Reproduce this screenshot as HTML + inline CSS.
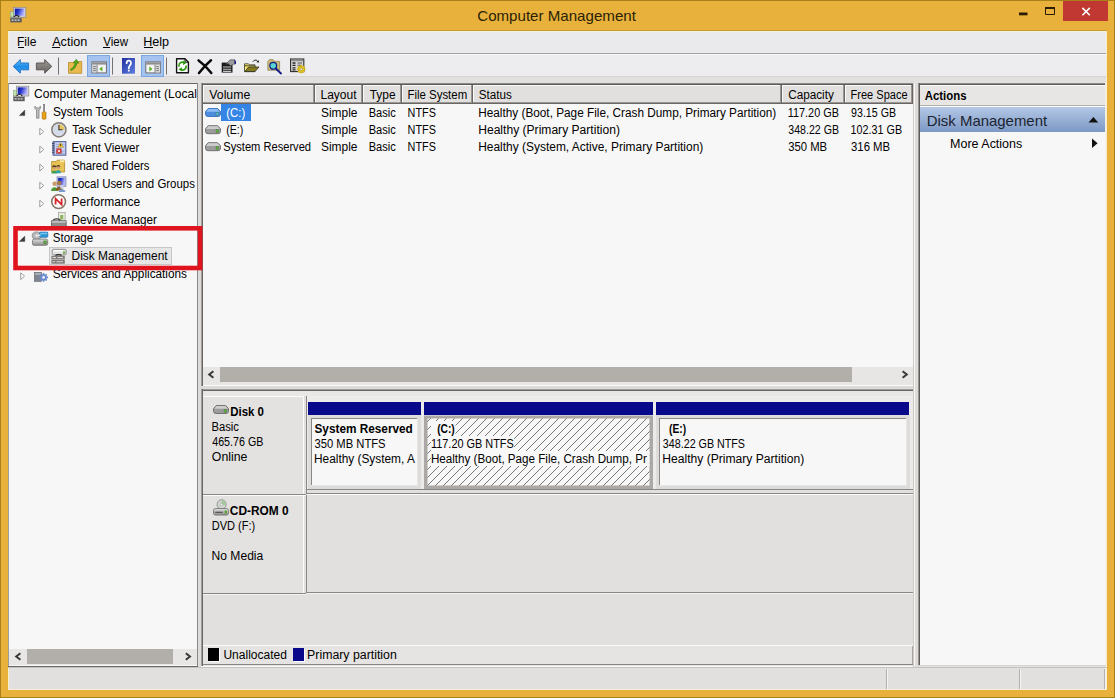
<!DOCTYPE html>
<html><head><meta charset="utf-8"><title>Computer Management</title>
<style>
html,body{margin:0;padding:0;background:#E7B13C;}
body{width:1115px;height:698px;overflow:hidden;font-family:"Liberation Sans",sans-serif;}
svg{display:block;font-family:"Liberation Sans",sans-serif;}
</style></head><body>
<svg width="1115" height="698" viewBox="0 0 1115 698" shape-rendering="auto">
<rect x="0" y="0" width="1115" height="698" fill="#E7B13C" />
<rect x="0" y="0" width="1115" height="1" fill="#A8801A" />
<rect x="0" y="0" width="1" height="698" fill="#A8801A" />
<rect x="1114" y="0" width="1" height="698" fill="#A8801A" />
<rect x="0" y="697" width="1115" height="1" fill="#A8801A" />
<rect x="8" y="30" width="1099" height="1" fill="#C99C30" />
<rect x="8" y="31" width="1099" height="659" fill="#E2E0DE" />
<rect x="8" y="31" width="1099" height="22" fill="#EAEAEC" />
<rect x="8" y="31" width="1099" height="1" fill="#F7F0DC" />
<rect x="8" y="31" width="1" height="52" fill="#F8EDCC" />
<rect x="8" y="668" width="1" height="22" fill="#F8EDCC" />
<rect x="8" y="689" width="1099" height="1" fill="#F6EED8" />
<rect x="8" y="53" width="1099" height="1" fill="#A2A2A2" />
<rect x="8" y="54" width="1099" height="1" fill="#FAFAFB" />
<rect x="8" y="55" width="1099" height="21" fill="#EDEDEF" />
<rect x="8" y="76" width="1099" height="1" fill="#D6D4D4" />
<rect x="1063" y="1" width="45" height="20" fill="#C03831" />
<path d="M1082.4 7.9 L1089.8 15.2 M1089.8 7.9 L1082.4 15.2" stroke="#fff" stroke-width="1.6" fill="none"/>
<path d="M1045.5 8 H1054.5 V14.5 H1045.5 Z" stroke="#2a1c04" stroke-width="1" fill="none"/>
<rect x="1045" y="7" width="10" height="2" fill="#2a1c04" />
<rect x="1019" y="12.5" width="8.5" height="2.8" fill="#2a1c04" />
<rect x="8" y="83" width="190" height="584" fill="#F8F7F7" />
<rect x="8" y="83" width="190" height="1" fill="#6A6663" />
<rect x="8" y="83" width="1" height="584" fill="#A09E9C" />
<rect x="197" y="83" width="1" height="584" fill="#8A8886" />
<rect x="8" y="666" width="190" height="1" fill="#6A6663" />
<rect x="9" y="649" width="188" height="16" fill="#E8E6E4" />
<rect x="27" y="649" width="146" height="15" fill="#B2AEAA" />
<path d="M20.4 653.2 L16.2 656.5 L20.4 659.8" stroke="#3a3836" stroke-width="2" fill="none"/>
<path d="M185.8 653.2 L190 656.5 L185.8 659.8" stroke="#3a3836" stroke-width="2" fill="none"/>
<rect x="198" y="83" width="3" height="584" fill="#DEDCDA" />
<rect x="201" y="83" width="713" height="303" fill="#F8F7F7" />
<rect x="201" y="83" width="713" height="1" fill="#8E8A88" />
<rect x="201" y="84" width="713" height="1" fill="#5E5A57" />
<rect x="201" y="83" width="1" height="303" fill="#A09C9A" />
<rect x="202" y="83" width="1" height="303" fill="#6A6663" />
<rect x="203" y="85" width="112" height="19" fill="#E2E0DE" />
<rect x="203" y="85" width="111" height="1" fill="#FBFBFB" />
<rect x="203" y="85" width="1" height="17" fill="#FBFBFB" />
<rect x="203" y="102" width="112" height="1" fill="#9A9694" />
<rect x="203" y="103" width="112" height="1" fill="#6A6663" />
<rect x="313" y="85" width="1" height="18" fill="#9A9694" />
<rect x="314" y="85" width="1" height="19" fill="#6A6663" />
<rect x="315" y="85" width="48" height="19" fill="#E2E0DE" />
<rect x="315" y="85" width="47" height="1" fill="#FBFBFB" />
<rect x="315" y="85" width="1" height="17" fill="#FBFBFB" />
<rect x="315" y="102" width="48" height="1" fill="#9A9694" />
<rect x="315" y="103" width="48" height="1" fill="#6A6663" />
<rect x="361" y="85" width="1" height="18" fill="#9A9694" />
<rect x="362" y="85" width="1" height="19" fill="#6A6663" />
<rect x="363" y="85" width="39" height="19" fill="#E2E0DE" />
<rect x="363" y="85" width="38" height="1" fill="#FBFBFB" />
<rect x="363" y="85" width="1" height="17" fill="#FBFBFB" />
<rect x="363" y="102" width="39" height="1" fill="#9A9694" />
<rect x="363" y="103" width="39" height="1" fill="#6A6663" />
<rect x="400" y="85" width="1" height="18" fill="#9A9694" />
<rect x="401" y="85" width="1" height="19" fill="#6A6663" />
<rect x="402" y="85" width="71" height="19" fill="#E2E0DE" />
<rect x="402" y="85" width="70" height="1" fill="#FBFBFB" />
<rect x="402" y="85" width="1" height="17" fill="#FBFBFB" />
<rect x="402" y="102" width="71" height="1" fill="#9A9694" />
<rect x="402" y="103" width="71" height="1" fill="#6A6663" />
<rect x="471" y="85" width="1" height="18" fill="#9A9694" />
<rect x="472" y="85" width="1" height="19" fill="#6A6663" />
<rect x="473" y="85" width="309" height="19" fill="#E2E0DE" />
<rect x="473" y="85" width="308" height="1" fill="#FBFBFB" />
<rect x="473" y="85" width="1" height="17" fill="#FBFBFB" />
<rect x="473" y="102" width="309" height="1" fill="#9A9694" />
<rect x="473" y="103" width="309" height="1" fill="#6A6663" />
<rect x="780" y="85" width="1" height="18" fill="#9A9694" />
<rect x="781" y="85" width="1" height="19" fill="#6A6663" />
<rect x="782" y="85" width="63" height="19" fill="#E2E0DE" />
<rect x="782" y="85" width="62" height="1" fill="#FBFBFB" />
<rect x="782" y="85" width="1" height="17" fill="#FBFBFB" />
<rect x="782" y="102" width="63" height="1" fill="#9A9694" />
<rect x="782" y="103" width="63" height="1" fill="#6A6663" />
<rect x="843" y="85" width="1" height="18" fill="#9A9694" />
<rect x="844" y="85" width="1" height="19" fill="#6A6663" />
<rect x="845" y="85" width="68" height="19" fill="#E2E0DE" />
<rect x="845" y="85" width="67" height="1" fill="#FBFBFB" />
<rect x="845" y="85" width="1" height="17" fill="#FBFBFB" />
<rect x="845" y="102" width="68" height="1" fill="#9A9694" />
<rect x="845" y="103" width="68" height="1" fill="#6A6663" />
<rect x="911" y="85" width="1" height="18" fill="#9A9694" />
<rect x="912" y="85" width="1" height="19" fill="#6A6663" />
<rect x="913" y="85" width="1" height="19" fill="#F8F7F7" />
<rect x="221" y="104" width="30" height="17" fill="#3585E6" />
<rect x="203" y="367" width="710" height="18" fill="#E8E6E4" />
<rect x="220" y="367" width="632" height="15" fill="#B2AEAA" />
<path d="M213.4 371.2 L209.2 374.5 L213.4 377.8" stroke="#3a3836" stroke-width="2" fill="none"/>
<path d="M902.6 371.2 L906.8 374.5 L902.6 377.8" stroke="#3a3836" stroke-width="2" fill="none"/>
<rect x="203" y="385" width="710" height="1" fill="#FCFCFC" />
<rect x="201" y="386" width="713" height="3" fill="#DCDAD8" />
<rect x="201" y="389" width="713" height="278" fill="#E2E0DE" />
<rect x="201" y="389" width="713" height="1" fill="#A09C9A" />
<rect x="201" y="390" width="713" height="1" fill="#6A6663" />
<rect x="201" y="389" width="1" height="278" fill="#A09C9A" />
<rect x="202" y="389" width="1" height="278" fill="#6A6663" />
<rect x="203" y="391" width="710" height="5" fill="#E9E7E5" />
<rect x="203" y="396" width="101" height="1" fill="#FBFBFB" />
<rect x="307" y="396" width="606" height="1" fill="#F0EEEC" />
<rect x="203" y="397" width="100" height="97" fill="#E4E2E0" />
<rect x="303" y="396" width="1" height="98" fill="#FBFBFB" />
<rect x="306" y="396" width="1" height="98" fill="#8A8684" />
<rect x="203" y="494" width="103" height="1" fill="#8A8684" />
<rect x="203" y="495" width="103" height="1" fill="#FBFBFB" />
<rect x="307" y="489" width="606" height="1" fill="#8A8684" />
<rect x="307" y="493" width="606" height="1" fill="#8A8684" />
<rect x="307" y="494" width="606" height="1" fill="#FBFBFB" />
<rect x="307" y="397" width="606" height="92" fill="#EDEBE9" />
<rect x="308" y="402" width="113" height="13" fill="#08088A" />
<rect x="424" y="402" width="229" height="13" fill="#08088A" />
<rect x="656" y="402" width="253" height="13" fill="#08088A" />
<defs><pattern id="hatch" width="8" height="8" patternUnits="userSpaceOnUse" x="1" y="0"><rect width="8" height="8" fill="#F8F8F8"/><path d="M-1 9 L9 -1 M-1 1 L1 -1 M7 9 L9 7" stroke="#555" stroke-width="0.8"/></pattern><linearGradient id="hdr" x1="0" y1="0" x2="0" y2="1"><stop offset="0" stop-color="#B4C8E6"/><stop offset="1" stop-color="#7C98C4"/></linearGradient><linearGradient id="barrow" x1="0" y1="0" x2="0" y2="1"><stop offset="0" stop-color="#6EC4FA"/><stop offset="0.5" stop-color="#1C8CE8"/><stop offset="1" stop-color="#3AA4F0"/></linearGradient><linearGradient id="garrow" x1="0" y1="0" x2="0" y2="1"><stop offset="0" stop-color="#9A9694"/><stop offset="1" stop-color="#6A6664"/></linearGradient><linearGradient id="scr" x1="0" y1="0" x2="1" y2="0.3"><stop offset="0" stop-color="#0818A0"/><stop offset="0.45" stop-color="#2838C8"/><stop offset="1" stop-color="#B0B0FF"/></linearGradient><linearGradient id="helpg" x1="0" y1="0" x2="1" y2="1"><stop offset="0" stop-color="#2030A0"/><stop offset="1" stop-color="#6080E0"/></linearGradient><linearGradient id="drvb" x1="0" y1="0" x2="0" y2="1"><stop offset="0" stop-color="#8CC0F4"/><stop offset="1" stop-color="#3A88E0"/></linearGradient><linearGradient id="drvg" x1="0" y1="0" x2="0" y2="1"><stop offset="0" stop-color="#E0E0E0"/><stop offset="1" stop-color="#8C8C8C"/></linearGradient></defs>
<rect x="308" y="415" width="113" height="74" fill="#DEDCDA" />
<rect x="311" y="418" width="107" height="68" fill="#F8F7F7" />
<rect x="311" y="418" width="107" height="1" fill="#8A8684" />
<rect x="311" y="418" width="1" height="68" fill="#8A8684" />
<rect x="311" y="485" width="107" height="1" fill="#E8E6E4" />
<rect x="417" y="418" width="1" height="68" fill="#E8E6E4" />
<rect x="424" y="415" width="229" height="74" fill="#ACA8A5" />
<rect x="427.5" y="418.5" width="222" height="67" fill="url(#hatch)"/>
<rect x="656" y="415" width="254" height="74" fill="#DEDCDA" />
<rect x="659" y="418" width="248" height="68" fill="#F8F7F7" />
<rect x="659" y="418" width="248" height="1" fill="#8A8684" />
<rect x="659" y="418" width="1" height="68" fill="#8A8684" />
<rect x="659" y="485" width="248" height="1" fill="#E8E6E4" />
<rect x="906" y="418" width="1" height="68" fill="#E8E6E4" />
<rect x="424" y="415" width="229" height="1" fill="#C8C6CE" />
<rect x="431" y="421" width="24.5" height="15" fill="#F8F8F8" />
<rect x="431" y="436" width="83" height="15" fill="#F8F8F8" />
<rect x="431" y="451" width="218.5" height="15" fill="#F8F8F8" />
<rect x="203" y="496" width="100" height="97" fill="#E4E2E0" />
<rect x="303" y="496" width="1" height="97" fill="#FBFBFB" />
<rect x="306" y="495" width="1" height="98" fill="#8A8684" />
<rect x="203" y="593" width="103" height="1" fill="#8A8684" />
<rect x="307" y="592" width="606" height="1" fill="#8A8684" />
<rect x="203" y="594" width="103" height="1" fill="#F4F2F0" />
<rect x="307" y="593" width="606" height="1" fill="#F4F2F0" />
<rect x="203" y="645" width="710" height="1" fill="#FBFBFB" />
<rect x="203" y="646" width="709" height="18" fill="#E6E4E2" />
<rect x="203" y="664" width="710" height="1" fill="#8A8684" />
<rect x="203" y="665" width="711" height="1" fill="#E6E4E2" />
<rect x="201" y="666" width="713" height="1" fill="#FBFBFB" />
<rect x="912" y="646" width="1" height="18" fill="#A8A4A2" />
<rect x="208" y="648" width="11" height="13" fill="#000" />
<rect x="293" y="648" width="11" height="13" fill="#08088A" />
<rect x="219" y="649" width="1" height="13" fill="#FBFBFB" />
<rect x="209" y="661" width="11" height="1" fill="#FBFBFB" />
<rect x="304" y="649" width="1" height="13" fill="#FBFBFB" />
<rect x="294" y="661" width="11" height="1" fill="#FBFBFB" />
<rect x="913" y="83" width="1" height="584" fill="#CCCAC7" />
<rect x="914" y="83" width="1" height="584" fill="#FAF7F5" />
<rect x="915" y="83" width="3" height="584" fill="#DEDCDA" />
<rect x="918" y="83" width="187" height="583" fill="#F8F7F7" />
<rect x="918" y="83" width="187" height="1" fill="#8E8A88" />
<rect x="918" y="84" width="187" height="1" fill="#5E5A57" />
<rect x="918" y="83" width="1" height="583" fill="#9A9694" />
<rect x="919" y="83" width="1" height="583" fill="#5E5A57" />
<rect x="1105" y="83" width="1" height="607" fill="#F4F0E8" />
<rect x="1106" y="31" width="1" height="659" fill="#F8EDCC" />
<rect x="920" y="85" width="185" height="20" fill="#E8E6E4" />
<rect x="920" y="85" width="185" height="1" fill="#FBFBFB" />
<rect x="920" y="105" width="185" height="1" fill="#B4B2B0" />
<rect x="920" y="106" width="185" height="1" fill="#FBFBFB" />
<rect x="920" y="107" width="185" height="25" fill="url(#hdr)" />
<path d="M1088.6 122.4 L1093.4 117 L1098.2 122.4 Z" fill="#111"/>
<path d="M1092 138.6 L1097.6 143.3 L1092 148 Z" fill="#111"/>
<rect x="918" y="665" width="188" height="1" fill="#D8D6D4" />
<rect x="8" y="667" width="1099" height="1" fill="#C4C2C0" />
<rect x="886" y="669" width="1" height="20" fill="#B4B0AE" />
<rect x="887" y="669" width="1" height="20" fill="#F6F4F2" />
<rect x="1019" y="669" width="1" height="20" fill="#B4B0AE" />
<rect x="1020" y="669" width="1" height="20" fill="#F6F4F2" />
<rect x="1104" y="669" width="1" height="20" fill="#B4B0AE" />
<rect x="1105" y="669" width="1" height="20" fill="#F6F4F2" />
<rect x="49.5" y="247.5" width="122" height="17" fill="#E6E6E6" stroke="#C6C6C6" stroke-width="1"/>
<g transform="translate(10,7.2)" ><rect x="3.4" y="0.2" width="12.4" height="9.8" fill="#D2D2DE" stroke="#8E8A86" stroke-width="0.7"/><rect x="4.8" y="1.4" width="9.4" height="7.2" fill="url(#scr)"/><rect x="0.4" y="4.6" width="3" height="5.2" fill="#C4E2B0" stroke="#7E9A6E" stroke-width="0.5"/><path d="M3.8 10 C4.8 7.9 8.2 7.9 9.2 10" fill="#F2F2F2" stroke="#1E1E1E" stroke-width="1.1"/><rect x="0.3" y="10" width="11.4" height="5.2" fill="#5C5C5C"/><rect x="0.3" y="10" width="11.4" height="1" fill="#9E9E9E"/><path d="M1.6 12.9 H3.6 M4.6 12.9 H6.6 M7.6 12.9 H9.6" stroke="#DADADA" stroke-width="1.3"/></g>
<g transform="translate(13,86)" ><rect x="3.4" y="0.2" width="12.4" height="9.8" fill="#D2D2DE" stroke="#8E8A86" stroke-width="0.7"/><rect x="4.8" y="1.4" width="9.4" height="7.2" fill="url(#scr)"/><rect x="0.4" y="4.6" width="3" height="5.2" fill="#C4E2B0" stroke="#7E9A6E" stroke-width="0.5"/><path d="M3.8 10 C4.8 7.9 8.2 7.9 9.2 10" fill="#F2F2F2" stroke="#1E1E1E" stroke-width="1.1"/><rect x="0.3" y="10" width="11.4" height="5.2" fill="#5C5C5C"/><rect x="0.3" y="10" width="11.4" height="1" fill="#9E9E9E"/><path d="M1.6 12.9 H3.6 M4.6 12.9 H6.6 M7.6 12.9 H9.6" stroke="#DADADA" stroke-width="1.3"/></g>
<path d="M13.2 66.4 L20.3 59.6 V63 H28.6 V69.8 H20.3 V73.2 Z" fill="url(#barrow)" stroke="#2474C8" stroke-width="1" stroke-linejoin="round"/>
<path d="M51.8 66.4 L44.7 59.6 V63 H36.4 V69.8 H44.7 V73.2 Z" fill="url(#garrow)" stroke="#5C5856" stroke-width="1" stroke-linejoin="round"/>
<rect x="58" y="57.5" width="1" height="17" fill="#74706E" />
<rect x="112" y="57.5" width="1" height="17" fill="#74706E" />
<rect x="166" y="57.5" width="1" height="17" fill="#74706E" />
<path d="M68.5 62.5 H73 L74.5 61.5 H81.7 V73.3 H68.5 Z" fill="#E8B94C" stroke="#B88A2A" stroke-width="0.8"/><path d="M70.2 69.5 C72.5 68.5 74.5 66 75.2 62.8 L73.2 63 L76.3 59.2 L78.8 63.3 L77 62.9 C76.4 66.8 74 69.6 71 70.6 Z" fill="#4FA81E" stroke="#2E7A10" stroke-width="0.5"/>
<rect x="87.5" y="55.5" width="22" height="21" fill="#A5C3EE" stroke="#78A6E2" stroke-width="1"/>
<rect x="141.5" y="55.5" width="22" height="21" fill="#A5C3EE" stroke="#78A6E2" stroke-width="1"/>
<g transform="translate(91.4,61.4)"><rect x="0.5" y="0.5" width="14.5" height="11" fill="#F4F4F4" stroke="#6E6E70" stroke-width="1"/><rect x="1" y="1" width="13.5" height="2.2" fill="#8E8E92"/><rect x="1" y="3.6" width="4.2" height="7.4" fill="#DADADC"/><path d="M1.8 5.2 H4.4 M1.8 7.2 H4.4 M1.8 9.2 H4.4" stroke="#707074" stroke-width="0.9"/><rect x="5.2" y="3.4" width="0.9" height="8" fill="#6E6E70"/><path d="M11 5 V10 L7.8 7.5 Z" fill="#58B020"/></g>
<g transform="translate(145.3,61.4)"><rect x="0.5" y="0.5" width="14.5" height="11" fill="#F4F4F4" stroke="#6E6E70" stroke-width="1"/><rect x="1" y="1" width="13.5" height="2.2" fill="#8E8E92"/><rect x="10.2" y="3.6" width="4.2" height="7.4" fill="#DADADC"/><path d="M11 5.2 H13.6 M11 7.2 H13.6 M11 9.2 H13.6" stroke="#707074" stroke-width="0.9"/><rect x="9.3" y="3.4" width="0.9" height="8" fill="#6E6E70"/><path d="M4 5 V10 L7.2 7.5 Z" fill="#58B020"/></g>
<rect x="122" y="58" width="13" height="15.7" fill="url(#helpg)" />
<path d="M126.6 63.2 C126.6 60 131 59.8 131 63 C131 65.4 128.8 65.4 128.8 68.2" fill="none" stroke="#fff" stroke-width="1.7" stroke-linecap="round"/><circle cx="128.8" cy="70.6" r="1.05" fill="#fff"/>
<path d="M176.6 58.8 H185 L188.4 62.2 V72.8 H176.6 Z" fill="#fff" stroke="#111" stroke-width="1.4" stroke-linejoin="round"/><path d="M185 58.8 V62.2 H188.4" fill="none" stroke="#111" stroke-width="1"/><path d="M179 66.8 A3.6 3.6 0 0 1 184.2 62.6" fill="none" stroke="#2E9A12" stroke-width="1.7"/><path d="M183.2 60.6 L186.6 63 L183 65 Z" fill="#2E9A12"/><path d="M186 65.4 A3.6 3.6 0 0 1 180.8 69.6" fill="none" stroke="#2E9A12" stroke-width="1.7"/><path d="M181.8 71.6 L178.4 69.2 L182 67.2 Z" fill="#2E9A12"/>
<path d="M198.6 60.4 C203 63.5 207.5 68 211.3 73 M211 60.2 C206.5 64 202.5 68.5 199 73" stroke="#0a0a0a" stroke-width="2.5" fill="none" stroke-linecap="round"/>
<g transform="translate(221,58.8)"><rect x="0.7" y="3.8" width="10.8" height="10" fill="#1a1a1a"/><path d="M2 8.2 H10.2 M2 10.4 H10.2 M2 12.6 H10.2" stroke="#C8C8C8" stroke-width="1.1"/><path d="M5 5.5 L9 1 H13.5 V5 L9.5 7 L7 4.6 Z" fill="#9A9A9E" stroke="#4A4A4E" stroke-width="0.6"/><path d="M13.5 0.5 L15 2.5 V5 L13.5 6 Z" fill="#18187A"/></g>
<g transform="translate(244,58.8)"><path d="M0.5 5 H4.5 L5.5 6 H11 V7.5 H0.5 Z" fill="#F2E46C" stroke="#222" stroke-width="0.7"/><path d="M0.5 7 H11 V12.8 H0.5 Z" fill="#F2E46C" stroke="#222" stroke-width="0.7"/><path d="M0.8 12.8 L4.6 8.2 H15 L11 12.8 Z" fill="#857A1E" stroke="#222" stroke-width="0.7"/><path d="M9 2.8 C10.5 0.8 13 0.8 14 3" fill="none" stroke="#111" stroke-width="1"/><path d="M12.5 3.4 L15 3.8 L14.6 1.4 Z" fill="#111"/></g>
<g transform="translate(267,58.8)"><path d="M0.8 2.5 L2.5 0.8 H6 L7.5 2.5 H12.6 V11.5 H0.8 Z" fill="#C9B97A" stroke="#8E8250" stroke-width="0.7"/><circle cx="6.2" cy="7" r="3.4" fill="#58D4D4" stroke="#141C84" stroke-width="1.2"/><path d="M8.8 9.8 L14 14.6" stroke="#141C84" stroke-width="2" stroke-linecap="round"/></g>
<g transform="translate(290,58.4)"><rect x="0.6" y="0.6" width="13.2" height="12.6" fill="#D8D8D8" stroke="#2a2a2a" stroke-width="1.1"/><rect x="1.2" y="1.2" width="12" height="1.6" fill="#8A8A8A"/><path d="M2.5 4.6 H5.5 M2.5 7 H5.5 M2.5 9.4 H5.5 M2.5 11.4 H5.5" stroke="#222" stroke-width="1.3"/><path d="M7.5 4.6 H12 M7.5 6.8 H12" stroke="#555" stroke-width="1.1"/><circle cx="11.2" cy="10.8" r="3.3" fill="#E8C824" stroke="#7A6A10" stroke-width="0.8"/><path d="M11.2 6.4 V15.2 M6.8 10.8 H15.6 M8.1 7.7 L14.3 13.9 M14.3 7.7 L8.1 13.9" stroke="#E8C824" stroke-width="1.5"/><circle cx="11.2" cy="10.8" r="1.3" fill="#F4F0E0" stroke="#7A6A10" stroke-width="0.5"/></g>
<path d="M24.8 115.6 H19.3 L24.8 110.1 Z" fill="#3A3A3A" stroke="#222" stroke-width="0.3"/>
<path d="M24.8 241.6 H19.3 L24.8 236.1 Z" fill="#3A3A3A" stroke="#222" stroke-width="0.3"/>
<path d="M39.8 128.2 L43.699999999999996 131.6 L39.8 135.0 Z" fill="#fff" stroke="#9C9C9C" stroke-width="1"/>
<path d="M39.8 146.20000000000002 L43.699999999999996 149.60000000000002 L39.8 153.0 Z" fill="#fff" stroke="#9C9C9C" stroke-width="1"/>
<path d="M39.8 164.20000000000002 L43.699999999999996 167.60000000000002 L39.8 171.0 Z" fill="#fff" stroke="#9C9C9C" stroke-width="1"/>
<path d="M39.8 182.20000000000002 L43.699999999999996 185.60000000000002 L39.8 189.0 Z" fill="#fff" stroke="#9C9C9C" stroke-width="1"/>
<path d="M39.8 200.20000000000002 L43.699999999999996 203.60000000000002 L39.8 207.0 Z" fill="#fff" stroke="#9C9C9C" stroke-width="1"/>
<path d="M20.7 272.79999999999995 L24.6 276.2 L20.7 279.59999999999997 Z" fill="#fff" stroke="#9C9C9C" stroke-width="1"/>
<g transform="translate(34,104)"><path d="M1 2.2 C0.5 4.5 1.5 5.5 2.6 6 V14.2 H5 V6 C6.2 5.4 6.8 4 6.4 2.2 L5 4 H2.6 Z" fill="#C4C4C4" stroke="#6E6E6E" stroke-width="0.7"/><rect x="9.4" y="0.5" width="1.4" height="7" fill="#9A9A9A" stroke="#5A5A5A" stroke-width="0.4"/><path d="M8.2 8.5 C8.2 7.4 12 7.4 12 8.5 V14.4 C12 15.6 8.2 15.6 8.2 14.4 Z" fill="#E9A313" stroke="#A06A08" stroke-width="0.6"/></g>
<g transform="translate(51,122)"><circle cx="7.9" cy="7.8" r="7.1" fill="#D5DBE8" stroke="#857C74" stroke-width="1.5"/><path d="M7.9 7.8 V2.2 A5.6 5.6 0 0 1 13.5 7.8 Z" fill="#E6C65C"/><path d="M7.9 3 V7.8 H11.5" stroke="#3A3632" stroke-width="1.1" fill="none"/></g>
<g transform="translate(52,141)"><rect x="1.5" y="0.6" width="12.3" height="13.6" fill="#C9D1F2" stroke="#5E6EA4" stroke-width="1.2"/><rect x="0.4" y="0.6" width="2.2" height="13.6" fill="#6E7CB0"/><path d="M0 2.5 H2.4 M0 4.7 H2.4 M0 6.9 H2.4 M0 9.1 H2.4 M0 11.3 H2.4" stroke="#30384E" stroke-width="0.8"/><path d="M4 3.4 H12.5 M4 5.6 H12.5 M4 10.2 H12.5 M4 12.3 H12.5" stroke="#8C98CC" stroke-width="0.7"/><path d="M8.6 1.6 L11.4 6.2 H5.8 Z" fill="#F1C62A" stroke="#9E7C10" stroke-width="0.4"/><rect x="8.25" y="3" width="0.8" height="2" fill="#3a2a00"/><rect x="4.6" y="7.8" width="4.6" height="4.4" fill="#D83434" stroke="#8E1A1A" stroke-width="0.4"/><path d="M5.7 8.8 L8.1 11.2 M8.1 8.8 L5.7 11.2" stroke="#fff" stroke-width="0.9"/></g>
<g transform="translate(51,159)"><path d="M0.6 2.6 H5 L6.2 1.2 H13.6 V13 H0.6 Z" fill="#E9C254" stroke="#B08C2A" stroke-width="0.8"/><path d="M9 1.2 H13.6 V3.2 H9 Z" fill="#F6E6A8"/><path d="M0.4 14.6 C0.4 10.4 6 10.4 6 14.6 Z" fill="#3FA24A"/><circle cx="3.2" cy="8.6" r="1.9" fill="#D2A070"/><path d="M1.2 8.4 C1.2 5.6 5.2 5.6 5.2 8.4 C4.4 7.4 2 7.4 1.2 8.4 Z" fill="#3E2E18"/><path d="M4.4 14.2 C4.4 10 10 10 10 14.2 Z" fill="#3AA0A0"/><circle cx="7.2" cy="8.2" r="1.9" fill="#D2A070"/><path d="M5.2 8 C5.2 5.2 9.2 5.2 9.2 8 C8.4 7 6 7 5.2 8 Z" fill="#3E2E18"/></g>
<g transform="translate(51,176)"><rect x="6" y="0.8" width="9" height="9.6" fill="#B8BCE0" stroke="#8488B8" stroke-width="0.7"/><rect x="7.2" y="2" width="6.6" height="7" fill="url(#scr)"/><circle cx="3.6" cy="7.8" r="2.2" fill="#C89A6A"/><path d="M0 15 C0 10 7.2 10 7.2 15 Z" fill="#4A9A3A"/><circle cx="8.2" cy="7" r="2.3" fill="#A87848"/><path d="M4.6 14.4 C4.6 9.4 11.8 9.4 11.8 14.4 Z" fill="#8A5A2A"/><circle cx="11" cy="11" r="1.9" fill="#C8D0E0"/><path d="M7.6 16 C7.6 12.2 14.4 12.2 14.4 16 Z" fill="#7A9ACA"/></g>
<g transform="translate(51,194)"><circle cx="7.6" cy="7.6" r="6.9" fill="#FDFDFD" stroke="#857468" stroke-width="1.6"/><path d="M4.6 10.6 V4.6 L10.6 10.6 V4.6" fill="none" stroke="#D6262A" stroke-width="1.8" stroke-linejoin="miter"/></g>
<g transform="translate(51,212)"><rect x="7.5" y="0.5" width="6.6" height="8.5" fill="#E8ECE0" stroke="#9A9E8E" stroke-width="0.7"/><rect x="9.2" y="3" width="3" height="4.5" fill="#8CB45A"/><path d="M2 8.6 C3 6.4 8.5 6.4 9.5 8.6" fill="none" stroke="#333" stroke-width="1.3"/><rect x="0.4" y="8.8" width="14.8" height="5.6" fill="#8E8E8E" stroke="#5A5A5A" stroke-width="0.7"/><rect x="0.8" y="9.2" width="14" height="1.5" fill="#C8C8C8"/><rect x="2" y="14" width="3" height="1.2" fill="#555"/><rect x="10.5" y="14" width="3" height="1.2" fill="#555"/></g>
<g transform="translate(32,231.5)"><ellipse cx="4.6" cy="4.2" rx="4.4" ry="3.8" fill="#B8B8B8" stroke="#7E7E7E" stroke-width="0.7"/><circle cx="4.6" cy="4.2" r="1.1" fill="#F4F4F4"/><rect x="7.6" y="0.6" width="8.2" height="5.2" rx="1" fill="#2F9AD8" stroke="#1C6CA8" stroke-width="0.7"/><rect x="8.4" y="1.2" width="6.6" height="1.4" fill="#7CC8F0"/><rect x="5.4" y="3" width="3" height="1.6" fill="#E8E8E8"/><rect x="0.5" y="7.6" width="15.2" height="6.2" rx="1.6" fill="url(#drvg)" stroke="#6E6E6E" stroke-width="0.8"/><rect x="11.8" y="9.4" width="2.6" height="2.8" fill="#5EA83A" stroke="#3A6E20" stroke-width="0.4"/></g>
<g transform="translate(51,248.8)"><rect x="1.2" y="0.5" width="14" height="5.6" rx="1.5" fill="#E2E2E2" stroke="#7A7A7A" stroke-width="0.8"/><rect x="2.6" y="1.2" width="9" height="1.6" fill="#FAFAFA"/><rect x="12" y="2.8" width="2.2" height="2.2" fill="#6EB040"/><path d="M4.5 6.8 C5.5 5.4 9.5 5.4 10.5 6.8" fill="none" stroke="#2a2a2a" stroke-width="1.3"/><rect x="0.4" y="7" width="13.4" height="3.6" fill="#7E7A78"/><path d="M1.5 8.8 H5 M6.5 8.8 H12" stroke="#E6E6E6" stroke-width="1"/><rect x="0.4" y="11" width="13.4" height="3.9" fill="#7E7A78"/><path d="M1.5 12.9 H4 M5.5 12.9 H12" stroke="#D8D8D8" stroke-width="1"/></g>
<g transform="translate(34,272)"><rect x="0.4" y="0.4" width="7.2" height="9" fill="#7E858E" stroke="#5E646C" stroke-width="0.6"/><rect x="1" y="1" width="6" height="2" fill="#A8AEB6"/><circle cx="9.6" cy="5.4" r="3.2" fill="#6A8ACC"/><path d="M9.6 1 V9.8 M5.2 5.4 H14 M6.5 2.3 L12.7 8.5 M12.7 2.3 L6.5 8.5" stroke="#6A8ACC" stroke-width="1.6"/><circle cx="9.6" cy="5.4" r="1.4" fill="#EEF2FA"/></g>
<g transform="translate(205,108)"><path d="M3.2 0.5 H12.6 L15.5 3.6 V6.2 Q15.5 8.5 13 8.5 H3 Q0.5 8.5 0.5 6.2 V3.6 Z" fill="#4C8CDC" stroke="#3A70BC" stroke-width="0.9"/><path d="M3.4 1 H12.4 L14.8 3.7 H1.2 Z" fill="#8CBCF4"/><rect x="11" y="4.3" width="2.6" height="3" fill="#58B8C8" stroke="#2E5A3A" stroke-width="0.3"/></g>
<g transform="translate(205,125.2)"><path d="M3.2 0.5 H12.6 L15.5 3.6 V6.2 Q15.5 8.5 13 8.5 H3 Q0.5 8.5 0.5 6.2 V3.6 Z" fill="#9C9C9C" stroke="#6C6C6C" stroke-width="0.9"/><path d="M3.4 1 H12.4 L14.8 3.7 H1.2 Z" fill="#CDCDCD"/><rect x="11" y="4.3" width="2.6" height="3" fill="#62B03A" stroke="#2E5A3A" stroke-width="0.3"/></g>
<g transform="translate(205,142.2)"><path d="M3.2 0.5 H12.6 L15.5 3.6 V6.2 Q15.5 8.5 13 8.5 H3 Q0.5 8.5 0.5 6.2 V3.6 Z" fill="#9C9C9C" stroke="#6C6C6C" stroke-width="0.9"/><path d="M3.4 1 H12.4 L14.8 3.7 H1.2 Z" fill="#CDCDCD"/><rect x="11" y="4.3" width="2.6" height="3" fill="#62B03A" stroke="#2E5A3A" stroke-width="0.3"/></g>
<g transform="translate(213,405)"><path d="M3.2 0.5 H12.6 L15.5 3.6 V6.2 Q15.5 8.5 13 8.5 H3 Q0.5 8.5 0.5 6.2 V3.6 Z" fill="#9C9C9C" stroke="#6C6C6C" stroke-width="0.9"/><path d="M3.4 1 H12.4 L14.8 3.7 H1.2 Z" fill="#CDCDCD"/><rect x="11" y="4.3" width="2.6" height="3" fill="#62B03A" stroke="#2E5A3A" stroke-width="0.3"/></g>
<g transform="translate(213,499.5)"><ellipse cx="8.6" cy="5" rx="4.6" ry="4.8" fill="#D0D4D0" stroke="#7A7E7A" stroke-width="0.7"/><path d="M8.6 0.4 A4.6 4.8 0 0 1 13 6 L8.6 5 Z" fill="#A4C89A"/><circle cx="8.6" cy="5" r="1.2" fill="#F8F8F8" stroke="#7A7E7A" stroke-width="0.4"/><rect x="0.5" y="9" width="15" height="6.6" rx="2" fill="url(#drvg)" stroke="#6E6E6E" stroke-width="0.8"/><rect x="2.2" y="12.2" width="7.5" height="1.3" fill="#5A5A5A"/><rect x="11.6" y="11" width="2.4" height="3" fill="#5EA83A"/></g>
<g id="txt">
<text x="477.24" y="21.0" font-size="15" fill="#2c1f05" textLength="158.65" lengthAdjust="spacingAndGlyphs">Computer Management</text>
<text x="17.00" y="46.0" font-size="12" fill="#000" textLength="19.34" lengthAdjust="spacingAndGlyphs">File</text>
<rect x="18" y="47" width="6" height="1" fill="#000"/>
<text x="52.20" y="46.0" font-size="12" fill="#000" textLength="35.14" lengthAdjust="spacingAndGlyphs">Action</text>
<rect x="52" y="47" width="8" height="1" fill="#000"/>
<text x="103.30" y="46.0" font-size="12" fill="#000" textLength="24.74" lengthAdjust="spacingAndGlyphs">View</text>
<rect x="103" y="47" width="7" height="1" fill="#000"/>
<text x="143.15" y="46.0" font-size="12" fill="#000" textLength="25.91" lengthAdjust="spacingAndGlyphs">Help</text>
<rect x="144" y="47" width="9" height="1" fill="#000"/>
<clipPath id="cp1"><rect x="0" y="84" width="197" height="20"/></clipPath>
<text x="34.10" y="98.0" font-size="12" fill="#000" textLength="162.75" lengthAdjust="spacingAndGlyphs" clip-path="url(#cp1)">Computer Management (Local</text>
<text x="52.91" y="116.0" font-size="12" fill="#000" textLength="70.28" lengthAdjust="spacingAndGlyphs">System Tools</text>
<text x="72.16" y="134.0" font-size="12" fill="#000" textLength="78.89" lengthAdjust="spacingAndGlyphs">Task Scheduler</text>
<text x="71.44" y="152.0" font-size="12" fill="#000" textLength="67.79" lengthAdjust="spacingAndGlyphs">Event Viewer</text>
<text x="71.93" y="170.0" font-size="12" fill="#000" textLength="77.45" lengthAdjust="spacingAndGlyphs">Shared Folders</text>
<text x="71.65" y="188.0" font-size="12" fill="#000" textLength="123.24" lengthAdjust="spacingAndGlyphs">Local Users and Groups</text>
<text x="71.60" y="206.0" font-size="12" fill="#000" textLength="68.65" lengthAdjust="spacingAndGlyphs">Performance</text>
<text x="71.62" y="224.0" font-size="12" fill="#000" textLength="85.40" lengthAdjust="spacingAndGlyphs">Device Manager</text>
<text x="52.72" y="242.0" font-size="12" fill="#000" textLength="40.49" lengthAdjust="spacingAndGlyphs">Storage</text>
<text x="71.61" y="260.0" font-size="12" fill="#000" textLength="95.96" lengthAdjust="spacingAndGlyphs">Disk Management</text>
<text x="52.71" y="278.0" font-size="12" fill="#000" textLength="134.28" lengthAdjust="spacingAndGlyphs">Services and Applications</text>
<text x="209.30" y="99.0" font-size="12" fill="#000" textLength="40.94" lengthAdjust="spacingAndGlyphs">Volume</text>
<text x="320.50" y="99.0" font-size="12" fill="#000" textLength="36.03" lengthAdjust="spacingAndGlyphs">Layout</text>
<text x="369.75" y="99.0" font-size="12" fill="#000" textLength="25.76" lengthAdjust="spacingAndGlyphs">Type</text>
<text x="407.55" y="99.0" font-size="12" fill="#000" textLength="59.60" lengthAdjust="spacingAndGlyphs">File System</text>
<text x="478.72" y="99.0" font-size="12" fill="#000" textLength="33.00" lengthAdjust="spacingAndGlyphs">Status</text>
<text x="788.21" y="99.0" font-size="12" fill="#000" textLength="45.63" lengthAdjust="spacingAndGlyphs">Capacity</text>
<text x="850.58" y="99.0" font-size="12" fill="#000" textLength="57.02" lengthAdjust="spacingAndGlyphs">Free Space</text>
<text x="226.19" y="117.4" font-size="12" fill="#fff" textLength="19.03" lengthAdjust="spacingAndGlyphs">(C:)</text>
<text x="226.24" y="134.0" font-size="12" fill="#000" textLength="17.11" lengthAdjust="spacingAndGlyphs">(E:)</text>
<text x="223.24" y="151.0" font-size="12" fill="#000" textLength="87.82" lengthAdjust="spacingAndGlyphs">System Reserved</text>
<text x="321.00" y="117.4" font-size="12" fill="#000" textLength="36.43" lengthAdjust="spacingAndGlyphs">Simple</text>
<text x="368.68" y="117.4" font-size="12" fill="#000" textLength="27.04" lengthAdjust="spacingAndGlyphs">Basic</text>
<text x="407.60" y="117.4" font-size="12" fill="#000" textLength="28.34" lengthAdjust="spacingAndGlyphs">NTFS</text>
<text x="321.00" y="134.0" font-size="12" fill="#000" textLength="36.43" lengthAdjust="spacingAndGlyphs">Simple</text>
<text x="368.68" y="134.0" font-size="12" fill="#000" textLength="27.04" lengthAdjust="spacingAndGlyphs">Basic</text>
<text x="407.60" y="134.0" font-size="12" fill="#000" textLength="28.34" lengthAdjust="spacingAndGlyphs">NTFS</text>
<text x="321.00" y="151.0" font-size="12" fill="#000" textLength="36.43" lengthAdjust="spacingAndGlyphs">Simple</text>
<text x="368.68" y="151.0" font-size="12" fill="#000" textLength="27.04" lengthAdjust="spacingAndGlyphs">Basic</text>
<text x="407.60" y="151.0" font-size="12" fill="#000" textLength="28.34" lengthAdjust="spacingAndGlyphs">NTFS</text>
<text x="478.22" y="117.4" font-size="12" fill="#000" textLength="298.07" lengthAdjust="spacingAndGlyphs">Healthy (Boot, Page File, Crash Dump, Primary Partition)</text>
<text x="478.19" y="134.0" font-size="12" fill="#000" textLength="141.72" lengthAdjust="spacingAndGlyphs">Healthy (Primary Partition)</text>
<text x="478.20" y="151.0" font-size="12" fill="#000" textLength="225.10" lengthAdjust="spacingAndGlyphs">Healthy (System, Active, Primary Partition)</text>
<text x="787.79" y="117.4" font-size="12" fill="#000" textLength="51.14" lengthAdjust="spacingAndGlyphs">117.20 GB</text>
<text x="788.26" y="134.0" font-size="12" fill="#000" textLength="50.80" lengthAdjust="spacingAndGlyphs">348.22 GB</text>
<text x="788.23" y="151.0" font-size="12" fill="#000" textLength="38.94" lengthAdjust="spacingAndGlyphs">350 MB</text>
<text x="851.06" y="117.4" font-size="12" fill="#000" textLength="44.97" lengthAdjust="spacingAndGlyphs">93.15 GB</text>
<text x="850.60" y="134.0" font-size="12" fill="#000" textLength="51.46" lengthAdjust="spacingAndGlyphs">102.31 GB</text>
<text x="851.03" y="151.0" font-size="12" fill="#000" textLength="39.15" lengthAdjust="spacingAndGlyphs">316 MB</text>
<text x="924.76" y="100.0" font-size="12" font-weight="bold" fill="#000" textLength="41.73" lengthAdjust="spacingAndGlyphs">Actions</text>
<text x="926.76" y="126.0" font-size="15" fill="#1c2430" textLength="120.38" lengthAdjust="spacingAndGlyphs">Disk Management</text>
<text x="950.06" y="148.0" font-size="12" fill="#000" textLength="72.23" lengthAdjust="spacingAndGlyphs">More Actions</text>
<text x="230.18" y="416.0" font-size="12" font-weight="bold" fill="#000" textLength="33.76" lengthAdjust="spacingAndGlyphs">Disk 0</text>
<text x="211.46" y="431.0" font-size="12" fill="#000" textLength="27.46" lengthAdjust="spacingAndGlyphs">Basic</text>
<text x="212.18" y="446.0" font-size="12" fill="#000" textLength="51.18" lengthAdjust="spacingAndGlyphs">465.76 GB</text>
<text x="211.89" y="461.0" font-size="12" fill="#000" textLength="35.56" lengthAdjust="spacingAndGlyphs">Online</text>
<text x="314.51" y="433.0" font-size="12" font-weight="bold" fill="#000" textLength="98.29" lengthAdjust="spacingAndGlyphs">System Reserved</text>
<text x="314.53" y="448.0" font-size="12" fill="#000" textLength="71.06" lengthAdjust="spacingAndGlyphs">350 MB NTFS</text>
<text x="314.01" y="463.0" font-size="12" fill="#000" textLength="100.83" lengthAdjust="spacingAndGlyphs">Healthy (System, A</text>
<text x="437.17" y="433.0" font-size="12" font-weight="bold" fill="#000" textLength="17.57" lengthAdjust="spacingAndGlyphs">(C:)</text>
<text x="430.99" y="448.0" font-size="12" fill="#000" textLength="82.80" lengthAdjust="spacingAndGlyphs">117.20 GB NTFS</text>
<text x="430.93" y="463.0" font-size="12" fill="#000" textLength="215.93" lengthAdjust="spacingAndGlyphs">Healthy (Boot, Page File, Crash Dump, Pr</text>
<text x="669.07" y="433.0" font-size="12" font-weight="bold" fill="#000" textLength="17.05" lengthAdjust="spacingAndGlyphs">(E:)</text>
<text x="662.85" y="448.0" font-size="12" fill="#000" textLength="82.13" lengthAdjust="spacingAndGlyphs">348.22 GB NTFS</text>
<text x="662.29" y="463.0" font-size="12" fill="#000" textLength="141.92" lengthAdjust="spacingAndGlyphs">Healthy (Primary Partition)</text>
<text x="229.80" y="515.0" font-size="12" font-weight="bold" fill="#000" textLength="58.84" lengthAdjust="spacingAndGlyphs">CD-ROM 0</text>
<text x="211.68" y="530.0" font-size="12" fill="#000" textLength="43.48" lengthAdjust="spacingAndGlyphs">DVD (F:)</text>
<text x="211.59" y="560.0" font-size="12" fill="#000" textLength="51.66" lengthAdjust="spacingAndGlyphs">No Media</text>
<text x="223.40" y="659.0" font-size="12" fill="#000" textLength="63.53" lengthAdjust="spacingAndGlyphs">Unallocated</text>
<text x="307.07" y="659.0" font-size="12" fill="#000" textLength="89.75" lengthAdjust="spacingAndGlyphs">Primary partition</text>
</g>
<rect x="15.5" y="228.3" width="184.6" height="39.7" fill="none" stroke="#E0141E" stroke-width="4.6"/>
</svg>
</body></html>
